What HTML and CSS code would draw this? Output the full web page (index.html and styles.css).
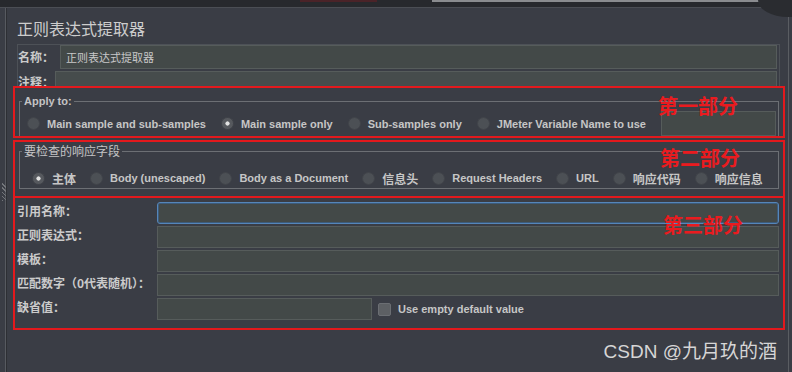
FILE: index.html
```html
<!DOCTYPE html>
<html lang="zh-CN">
<head>
    <meta charset="UTF-8">
    <meta name="viewport" content="width=device-width, initial-scale=1.0">
    <title>正则表达式提取器</title>
    <link rel="stylesheet" href="styles.css">
</head>
<body>
    <div class="topbar">
        <span class="tb-space"></span>
        <span class="tb-red"></span>
        <span class="tb-space2"></span>
        <span class="tb-gray"></span>
    </div>
    <div class="corner"></div>

    <div class="frame">
        <div class="gutter"><div class="grip"></div></div>

        <div class="main">
            <h2 class="title">正则表达式提取器</h2>

            <div class="namepanel">
                <div class="namerow">
                    <label for="name">名称：</label>
                    <input class="field" type="text" id="name" value="正则表达式提取器">
                </div>
                <div class="commentrow">
                    <label for="comment">注释：</label>
                    <input class="field" type="text" id="comment">
                </div>
            </div>

            <!-- 第一部分 -->
            <div class="mark mark-one">
                <fieldset class="group">
                    <legend>Apply to:</legend>
                    <div class="radios radios-apply">
                        <label class="opt"><input type="radio" name="apply"><span>Main sample and sub-samples</span></label>
                        <label class="opt"><input type="radio" name="apply" checked><span>Main sample only</span></label>
                        <label class="opt"><input type="radio" name="apply"><span>Sub-samples only</span></label>
                        <label class="opt"><input type="radio" name="apply"><span>JMeter Variable Name to use</span></label>
                        <input class="field var-field" type="text">
                    </div>
                </fieldset>
                <span class="note note-one">第一部分</span>
            </div>

            <!-- 第二部分 -->
            <div class="mark mark-two">
                <fieldset class="group">
                    <legend class="cn">要检查的响应字段</legend>
                    <div class="radios radios-field">
                        <label class="opt"><input type="radio" name="field" checked><span class="cn">主体</span></label>
                        <label class="opt"><input type="radio" name="field"><span>Body (unescaped)</span></label>
                        <label class="opt"><input type="radio" name="field"><span>Body as a Document</span></label>
                        <label class="opt"><input type="radio" name="field"><span class="cn">信息头</span></label>
                        <label class="opt"><input type="radio" name="field"><span>Request Headers</span></label>
                        <label class="opt"><input type="radio" name="field"><span>URL</span></label>
                        <label class="opt"><input type="radio" name="field"><span class="cn">响应代码</span></label>
                        <label class="opt"><input type="radio" name="field"><span class="cn">响应信息</span></label>
                    </div>
                </fieldset>
                <span class="note note-two">第二部分</span>
            </div>

            <!-- 第三部分 -->
            <div class="mark mark-three">
                <label for="refname">引用名称：</label>
                <input class="field focused" type="text" id="refname">

                <label for="regex">正则表达式：</label>
                <input class="field" type="text" id="regex">

                <label for="template">模板：</label>
                <input class="field" type="text" id="template">

                <label for="matchno">匹配数字（0代表随机）：</label>
                <input class="field" type="text" id="matchno">

                <label for="default">缺省值：</label>
                <div class="defaultrow">
                    <input class="field short" type="text" id="default">
                    <input class="check" type="checkbox" id="emptydefault">
                    <label class="checklabel" for="emptydefault">Use empty default value</label>
                </div>

                <span class="note note-three">第三部分</span>
            </div>

            <div class="watermark">CSDN @九月玖的酒</div>
        </div>
    </div>
</body>
</html>
```

FILE: styles.css
```css
* {
    box-sizing: border-box;
}
body {
    margin: 0;
    width: 792px;
    height: 372px;
    overflow: hidden;
    position: relative;
    background-color: #3a3d45;
    color: #c8c8c8;
    font-family: "Liberation Sans", "Noto Sans CJK SC", sans-serif;
}

/* top strip from the window above */
.topbar {
    display: flex;
    height: 8px;
    background-color: #27292d;
    border-bottom: 1px solid #4b4e54;
}
.topbar span {
    height: 2px;
}
.tb-space { width: 300px; }
.tb-red { width: 77px; background-color: #4a2328; }
.tb-space2 { width: 55px; }
.tb-gray { width: 330px; background-color: #8a8c8f; }
.corner {
    position: absolute;
    top: 0;
    right: 0;
    width: 34px;
    height: 17px;
    background-color: #2a2c30;
    border-bottom-left-radius: 30px 17px;
}

.frame {
    display: flex;
    height: 364px;
    padding-right: 4px;
}
.gutter {
    width: 9px;
    border-right: 1px solid #2d2f34;
    box-shadow: inset -1px 0 #575a60;
    padding-top: 175px;
}
.grip {
    width: 4px;
    height: 18px;
    margin-left: 2px;
    background: repeating-linear-gradient(45deg, #73767b 0 1px, transparent 1px 3px);
}
.main {
    flex: 1;
    border-right: 1px solid #5a5d62;
    padding: 0 3px 0 6px;
}

.title {
    margin: 0 0 2px 4px;
    padding-top: 6px;
    height: 34px;
    font-size: 16px;
    line-height: 28px;
    font-weight: normal;
    color: #cdcdcd;
    font-family: "Noto Sans CJK SC", sans-serif;
}

label {
    font-family: "Noto Sans CJK SC", sans-serif;
    font-weight: bold;
    font-size: 12px;
    color: #cbcbcb;
}
.field {
    height: 22px;
    margin: 0;
    padding: 0 5px;
    background-color: #434948;
    border: 1px solid #565c5b;
    border-radius: 0;
    color: #c8c8c8;
    font-family: "Noto Sans CJK SC", sans-serif;
    font-size: 11px;
    outline: none;
}

.namepanel {
    margin: 0 5px 0 4px;
    border: 1px solid #4d5157;
    border-bottom: none;
    padding-right: 2px;
}
.namerow {
    display: flex;
    height: 24px;
}
.namerow label {
    width: 42px;
    line-height: 24px;
}
.namerow .field {
    flex: 1;
    height: 24px;
}
.commentrow {
    display: flex;
    height: 15px;
    margin-top: 2px;
    overflow: hidden;
}
.commentrow label {
    width: 37px;
    line-height: 22px;
}
.commentrow .field {
    flex: 1;
    background-color: #464c4c;
}

/* red annotation boxes */
.mark {
    position: relative;
    overflow: hidden;
    border: 2px solid #e3191d;
}
.note {
    position: absolute;
    font-family: "Noto Sans CJK SC", sans-serif;
    font-weight: bold;
    font-size: 20px;
    line-height: 20px;
    color: #ea1b1f;
}
.note-one { left: 643px; top: 8px; }
.note-two { left: 645px; top: 6px; }
.note-three { left: 648px; top: 17px; }

.mark-one {
    height: 52px;
    padding: 7px 4px 0;
}
.mark-two {
    height: 58px;
    margin-top: 2px;
    padding: 2px 4px 0;
}
.group {
    margin: 0;
    padding: 0 2px;
    min-width: 0;
    border: 1px solid #6c6f74;
}
.group legend {
    padding: 0 2px;
    font-size: 11px;
    font-weight: bold;
    line-height: 12px;
    color: #c4c4c4;
}
.group legend.cn {
    font-family: "Noto Sans CJK SC", sans-serif;
    font-weight: normal;
    font-size: 12px;
    line-height: 14px;
}

.radios {
    display: flex;
    align-items: center;
}
.radios-apply {
    height: 25px;
    margin-top: 4px;
    padding-left: 5px;
    gap: 15px;
}
.radios-field {
    height: 20px;
    margin-top: 10px;
    padding-left: 10px;
    gap: 14px;
}
.opt {
    display: flex;
    align-items: center;
    font-family: "Liberation Sans", "Noto Sans CJK SC", sans-serif;
    font-size: 11px;
    color: #c6c6c6;
    white-space: nowrap;
}
.opt .cn {
    font-family: "Noto Sans CJK SC", sans-serif;
    font-size: 12px;
}
.opt input {
    appearance: none;
    width: 13px;
    height: 13px;
    margin: 0 7px 0 0;
    border-radius: 50%;
    background-color: #4c5055;
    border: 1px solid #41444a;
}
.opt input:checked {
    background: radial-gradient(circle, #e2e2e2 0 1.8px, #56595e 2.4px);
}
.var-field {
    width: 115px;
    height: 25px;
    margin-left: auto;
}

.mark-three {
    margin-top: -2px;
    padding: 4px 4px 8px 2px;
    display: grid;
    grid-template-columns: 140px 1fr;
    grid-auto-rows: 22px;
    row-gap: 2px;
}
.mark-three > label {
    line-height: 18px;
    white-space: nowrap;
}
.mark-three .field {
    width: 100%;
}
.mark-three .focused {
    border: 1px solid #5586ba;
    border-radius: 3px;
    box-shadow: inset 0 0 0 1px #3d5b7a;
}
.defaultrow {
    display: flex;
    align-items: center;
}
.defaultrow .short {
    width: 215px;
}
.check {
    appearance: none;
    width: 13px;
    height: 13px;
    margin: 0 7px 0 6px;
    background-color: #5d6064;
    border: 1px solid #6b6e73;
    border-radius: 2px;
}
.checklabel {
    font-family: "Liberation Sans", sans-serif;
    font-size: 11px;
    color: #c6c6c6;
}

.watermark {
    margin-top: 10px;
    padding-right: 8px;
    text-align: right;
    font-size: 19px;
    line-height: 24px;
    color: #d6d6d6;
}
```
